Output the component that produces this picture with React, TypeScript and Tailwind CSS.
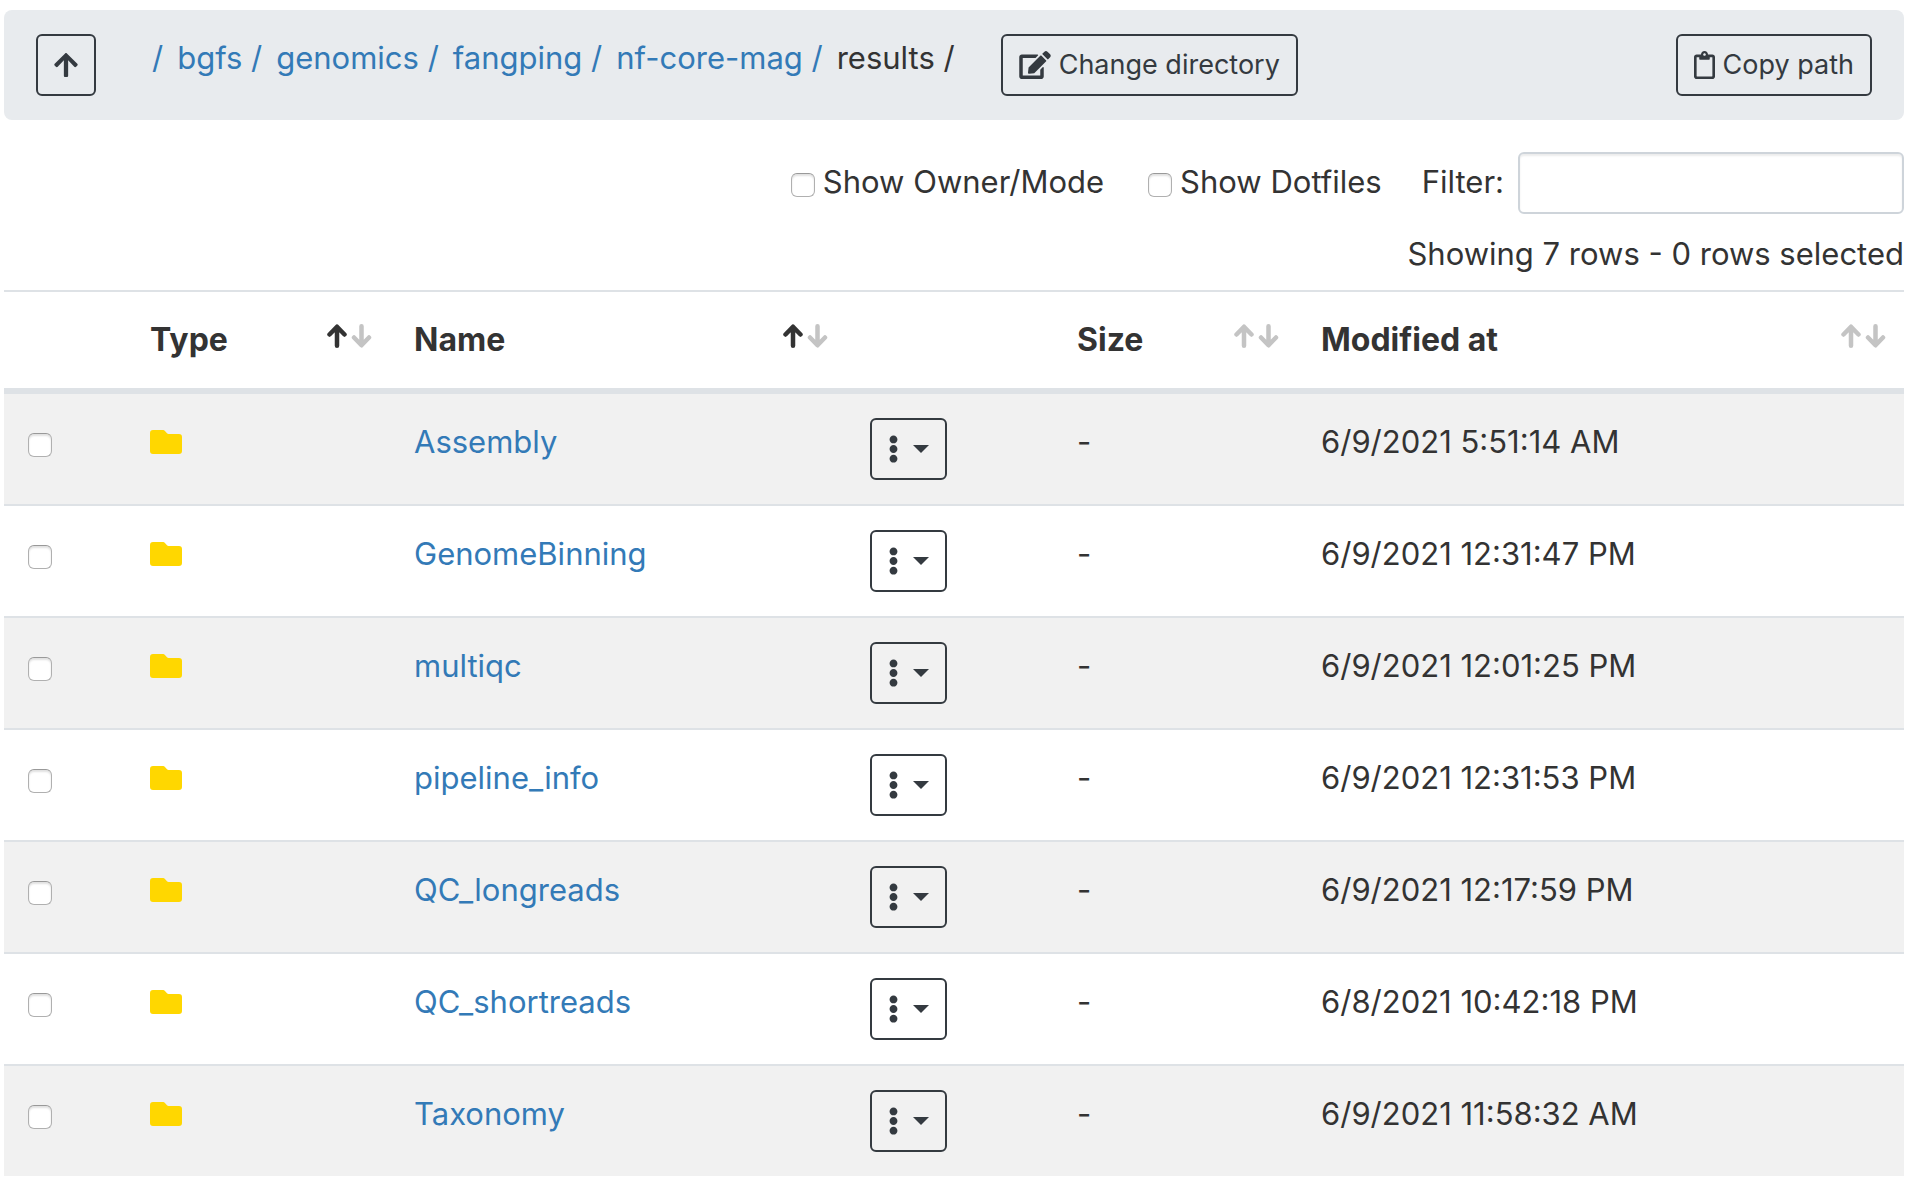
import { useState } from "react";
import { FaArrowUp, FaEdit, FaEllipsisV, FaRegClipboard } from "react-icons/fa";

type Entry = { name: string; modified: string };

const PATH = ["bgfs", "genomics", "fangping", "nf-core-mag"];

const ENTRIES: Entry[] = [
  { name: "Assembly", modified: "6/9/2021 5:51:14 AM" },
  { name: "GenomeBinning", modified: "6/9/2021 12:31:47 PM" },
  { name: "multiqc", modified: "6/9/2021 12:01:25 PM" },
  { name: "pipeline_info", modified: "6/9/2021 12:31:53 PM" },
  { name: "QC_longreads", modified: "6/9/2021 12:17:59 PM" },
  { name: "QC_shortreads", modified: "6/8/2021 10:42:18 PM" },
  { name: "Taxonomy", modified: "6/9/2021 11:58:32 AM" },
];

const BUTTON =
  "flex h-[62px] shrink-0 items-center rounded-md border-2 border-[#343a40] px-4 text-[27px] leading-[42px] text-[#343a40]";
const CHECKBOX =
  "block size-6 shrink-0 appearance-none rounded-md border border-[#b0b0b0] border-t-[#999] bg-white shadow-[inset_0_2px_2px_rgba(0,0,0,0.12)] checked:bg-[#337ab7]";

function SortArrows({ ascending = false }: { ascending?: boolean }) {
  return (
    <svg width="45" height="24" viewBox="0 0 45 24" fill="none" strokeWidth="4.5" strokeLinecap="round" strokeLinejoin="round">
      <path d="M2.500 10.500 10 2.700l7.500 7.800M10 3.500V21.700" stroke={ascending ? "#333" : "#c4c4c4"} />
      <path d="M27 13.500l7.500 7.800 7.500-7.800M34.500 20.500V2.300" stroke="#c4c4c4" />
    </svg>
  );
}

function HeaderCell({ label, ascending }: { label: string; ascending?: boolean }) {
  return (
    <th scope="col" className="py-6 pr-[18px] pl-6 text-left text-[32px] font-bold">
      <button type="button" className="flex w-full items-start justify-between text-left">
        {label}
        <span className="mt-2">
          <SortArrows ascending={ascending} />
        </span>
      </button>
    </th>
  );
}

function FolderIcon() {
  return (
    <svg width="32" height="24" viewBox="0 0 32 24" fill="#ffd700" role="img" aria-label="Folder">
      <path d="M3 0h10.200a2 2 0 0 1 1.500.7L17 3.300a2 2 0 0 0 1.500.7H29a3 3 0 0 1 3 3v14a3 3 0 0 1-3 3H3a3 3 0 0 1-3-3V3a3 3 0 0 1 3-3z" />
    </svg>
  );
}

export default function App() {
  const [filter, setFilter] = useState("");
  const rows = ENTRIES.filter((entry) => entry.name.toLowerCase().includes(filter.toLowerCase()));

  return (
    <main className="bg-white pt-2.5 pr-4 pb-2.5 pl-1 font-['Inter',sans-serif] text-[31px] leading-[48px] text-[#333]">
      <header className="flex items-start rounded-lg bg-[#e8ebee] px-8 py-6">
        <button type="button" aria-label="Parent directory" className={BUTTON}>
          <FaArrowUp className="h-7 w-6" />
        </button>
        <nav aria-label="Path" className="ml-14">
          <ol className="flex gap-3.5">
            <li>
              <a href="#root" className="text-[#337ab7]">/</a>
            </li>
            {PATH.map((part) => (
              <li key={part}>
                <a href={"#" + part} className="text-[#337ab7]">{part} /</a>
              </li>
            ))}
            <li aria-current="page">results /</li>
          </ol>
        </nav>
        <button type="button" className={BUTTON + " ml-[46px] gap-2"}>
          <FaEdit className="h-7 w-8" />
          Change directory
        </button>
        <button type="button" className={BUTTON + " ml-auto gap-2"}>
          <FaRegClipboard className="h-7 w-[21px]" />
          Copy path
        </button>
      </header>

      <div className="mt-8 flex items-start justify-end">
        <label className="mt-1.5 flex items-start gap-2">
          <input type="checkbox" className={CHECKBOX + " mt-[15px]"} />
          Show Owner/Mode
        </label>
        <label className="mt-1.5 ml-11 flex items-start gap-2">
          <input type="checkbox" className={CHECKBOX + " mt-[15px]"} />
          Show Dotfiles
        </label>
        <label htmlFor="filter" className="mt-1.5 ml-10">Filter:</label>
        <input
          id="filter"
          type="text"
          value={filter}
          onChange={(event) => setFilter(event.target.value)}
          className="ml-3.5 h-[62px] w-[386px] rounded-md border-2 border-[#ced4da] bg-white px-4 shadow-[inset_0_2px_2px_rgba(0,0,0,0.075)]"
        />
      </div>
      <p className="mt-4 text-right">Showing {rows.length} rows - 0 rows selected</p>

      <table className="mt-3 w-full table-fixed border-separate border-spacing-0 [&_th]:border-t-2 [&_th]:border-b-[6px] [&_th]:border-[#dee2e6]">
        <colgroup>
          <col className="w-[122px]" />
          <col className="w-[264px]" />
          <col className="w-[456px]" />
          <col className="w-[207px]" />
          <col className="w-[244px]" />
          <col />
        </colgroup>
        <thead>
          <tr>
            <th scope="col" aria-label="Select" />
            <HeaderCell label="Type" ascending />
            <HeaderCell label="Name" ascending />
            <th scope="col" aria-label="Actions" />
            <HeaderCell label="Size" />
            <HeaderCell label="Modified at" />
          </tr>
        </thead>
        <tbody className="[&_td]:border-[#dee2e6] [&_td]:px-6 [&_td]:py-6 [&_td]:align-top [&_tr:not(:last-child)>td]:border-b-2">
          {rows.map((entry) => (
            <tr key={entry.name} className="odd:bg-[#f1f1f1]">
              <td>
                <input type="checkbox" aria-label={"Select " + entry.name} className={CHECKBOX + " mt-[15px]"} />
              </td>
              <td>
                <div className="pt-3">
                  <FolderIcon />
                </div>
              </td>
              <td>
                <a href={"#" + entry.name} className="text-[#337ab7]">{entry.name}</a>
              </td>
              <td>
                <button type="button" aria-label={"Actions for " + entry.name} aria-haspopup="menu" className={BUTTON + " gap-3.5"}>
                  <FaEllipsisV className="h-7 w-[11px]" />
                  <svg width="16" height="8" viewBox="0 0 16 8" fill="currentColor">
                    <path d="M0 0h16L8 8z" />
                  </svg>
                </button>
              </td>
              <td>-</td>
              <td>{entry.modified}</td>
            </tr>
          ))}
        </tbody>
      </table>
    </main>
  );
}
